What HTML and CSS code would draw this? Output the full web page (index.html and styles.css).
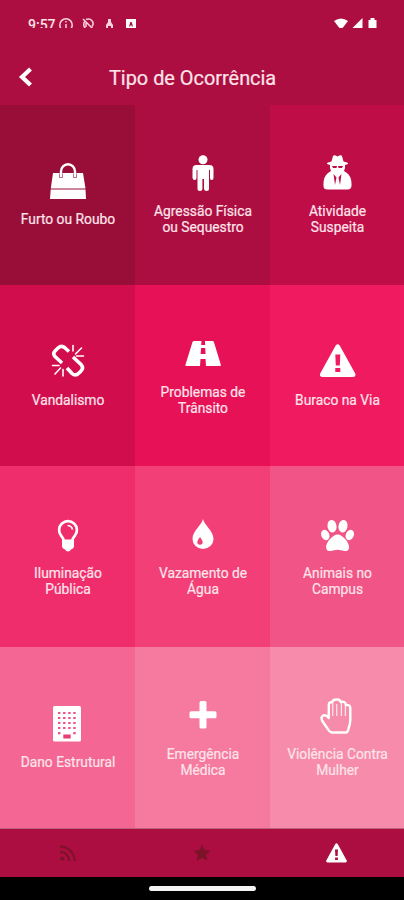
FILE: index.html
```
<!DOCTYPE html>
<html lang="pt-BR">
<head>
    <meta charset="UTF-8">
    <title>Tipo de Ocorrência</title>
    <link rel="stylesheet" href="styles.css">
</head>
<body>
    <div class="status">
        <span class="time">9:57</span>
        <svg class="notes" width="80" height="14" viewBox="0 0 80 14">
            <g fill="none" stroke="#f9d3dc" stroke-width="1.500">
                <circle cx="8" cy="7" r="6.200"/>
                <path d="M8 3v1.500M8 6v6"/>
                <path d="M25 1l11 11M27 3c-3 4 0 9 4 9M28 1.500c5-2 9 3 6 7M28 5v4"/>
            </g>
            <path fill="#f9d3dc" d="M50 1h3v3l2 3v4h-2V8h-3v3h-2V7l2-3z"/>
            <path fill="#fff" fill-rule="evenodd" d="M68 1h10v12H68zM71 8.500h1.200V7.500h1.600v1H75L73.700 4h-1.400z"/>
        </svg>
        <svg class="signal" width="44" height="11" viewBox="0 0 44 11" fill="#fff">
            <path d="M0 3Q7-2 14 3L9 9.500Q7 11 5 9.500z"/>
            <path d="M28.500 0v10H18.500z"/>
            <path d="M34.500 2h2V0h4v2h2v8h-8z"/>
        </svg>
    </div>

    <div class="header">
        <svg class="back" width="14" height="20" viewBox="0 0 14 20"><path d="M12.500 2L4 10l8.500 8" fill="none" stroke="#fff" stroke-width="4.200"/></svg>
        <h1>Tipo de Ocorrência</h1>
    </div>

    <div class="grid">
        <div class="tile furto">
            <svg class="icon" viewBox="0 0 36 36">
                <path fill="#fff" d="M3 10h30l2.500 15.500H.8zM.7 26.500h34.800L36 36H0z"/>
                <path fill="none" stroke="#fff" stroke-width="2.400" d="M11 14V8.500a7 7.300 0 0 1 14 0V14"/>
                <path fill="none" stroke="#990e39" stroke-width=".6" d="M9.500 10.500v4h3v-4M23.500 10.500v4h3v-4"/>
            </svg>
            <span>Furto ou Roubo</span>
        </div>
        <div class="tile agressao">
            <svg class="icon" viewBox="0 0 36 36" fill="#fff">
                <circle cx="18" cy="4.800" r="4.500"/>
                <path d="M11.500 10h13q4 0 4 4v9q0 2-1.800 2t-1.700-2v-8h-1v19q0 2-2.400 2T19 34V24h-1.600v10q0 2-2.500 2t-2.400-2V15h-1v8q0 2-1.800 2t-2.200-2v-9q0-4 4-4z"/>
            </svg>
            <span>Agressão Física<br>ou Sequestro</span>
        </div>
        <div class="tile suspeita">
            <svg class="icon" viewBox="0 0 36 36">
                <path fill="#fff" d="M8 7.500l3.500-1L13 1q1-1.500 4.500.5Q21 -.5 22 1l1.500 5.500 3.500 1q3 1.500-2 2.500v3l-1 3 3 2q5 4 4.500 13-.5 3.500-4 3.500H7.500q-4 0-4-3.500-.5-9 4.500-13l3-2-1-3v-3Q5 9 8 7.500z"/>
                <path fill="#bf0d48" d="M12 11h5l-.5 2H13zM18 11h5l-1 2h-3.500zM13.500 19l3 3.500L15 30zM21.500 19l-3 3.500L20 30z"/>
            </svg>
            <span>Atividade<br>Suspeita</span>
        </div>
        <div class="tile vandalismo">
            <svg class="icon" viewBox="0 0 36 36" fill="none" stroke="#fff">
                <path stroke-width="3.600" d="M12 19L5 12.500Q2.500 9.500 5 7L8 4Q11.500 1 14.500 3.500l4.500 4M17 24l5 5.500q3.500 3 7-.5l2-2q3-3 0-6.500L23 13"/>
                <path stroke-width="1.600" stroke-linecap="round" d="M23 1.500V7M31.500 4l-6 6M33.500 12h-7M2.500 21.500H9M5 30l5.500-6M13 32v-6.500"/>
            </svg>
            <span>Vandalismo</span>
        </div>
        <div class="tile transito">
            <svg class="icon" viewBox="0 0 36 36" fill="#fff">
                <path fill-rule="evenodd" d="M9 5h7.500l-.3 4h4l-.3-4h7.600q1 0 1.400 1l7 23q.2 1-1 1H21l-.5-7h-5l-.5 7H1.300q-1.200 0-.9-1L7.500 6Q8 5 9 5zM16.100 12l-.5 6h5l-.4-6z"/>
            </svg>
            <span>Problemas de<br>Trânsito</span>
        </div>
        <div class="tile buraco">
            <svg class="icon" viewBox="0 0 36 36">
                <path fill="#fff" d="M15.700 1.500q2-2.500 4 0l15.500 28q1.200 3-2.200 3.500H2q-3-.5-1.800-3.500z"/>
                <path fill="#ef1a5f" d="M15.300 10.500h5l-.5 11h-4zM15.300 24h5v4h-5z"/>
            </svg>
            <span>Buraco na Via</span>
        </div>
        <div class="tile iluminacao">
            <svg class="icon" viewBox="0 0 36 36">
                <path fill="none" stroke="#fff" stroke-width="2.700" d="M13.500 24q0-3-2.500-5.500a8.900 8.900 0 1 1 14 0q-2.500 2.500-2.500 5.500"/>
                <path fill="#fff" d="M12 22.500h12v7q0 2-3 3-1 2-3 2t-3-2q-3-1-3-3z"/>
                <path fill="none" stroke="#fff" stroke-width="1.600" d="M17.500 8.500q4 0 5 4"/>
            </svg>
            <span>Iluminação<br>Pública</span>
        </div>
        <div class="tile vazamento">
            <svg class="icon" viewBox="0 0 36 36">
                <path fill="#fff" d="M18 2c1.500 6.500 10.500 12 10.500 20a10.500 10 0 0 1-21 0C7.500 14 16.500 8.500 18 2z"/>
                <path fill="#f23f77" d="M15 20q2.700 3.500 2.700 5a2.700 2.700 0 0 1-5.400 0q0-1.500 2.700-5z"/>
            </svg>
            <span>Vazamento de<br>Água</span>
        </div>
        <div class="tile animais">
            <svg class="icon" viewBox="0 0 36 36" fill="#fff">
                <ellipse cx="12" cy="9.200" rx="4.500" ry="6.300" transform="rotate(-10 12 9.200)"/>
                <ellipse cx="23" cy="9.200" rx="4.500" ry="6.300" transform="rotate(10 23 9.200)"/>
                <ellipse cx="5.300" cy="18" rx="4" ry="5.400" transform="rotate(-22 5.300 18)"/>
                <ellipse cx="29.800" cy="18" rx="4" ry="5.400" transform="rotate(22 29.800 18)"/>
                <path d="M17.600 17.500c4.700 0 11.500 7.500 11.500 12.500 0 3.500-2.500 4.500-5 4-2.500-.4-4-1.200-6.500-1.200s-4 .8-6.500 1.200c-2.500.5-5-.5-5-4 0-5 6.800-12.500 11.500-12.500z"/>
            </svg>
            <span>Animais no<br>Campus</span>
        </div>
        <div class="tile dano">
            <svg class="icon" viewBox="0 0 36 36">
                <rect x="3" y="0" width="28" height="35.500" rx="1.500" fill="#fff"/>
                <path stroke="#f04f84" stroke-width="2.200" stroke-dasharray="2.400 2.700" d="M8 7h18M8 12h18M8 17h18M8 22h18"/>
                <path fill="#f04f84" d="M8 26h2.400v2.200H8zM23.300 26h2.400v2.200h-2.400z"/>
                <path fill="#e73f74" d="M13.300 28.500h7.400v4h-7.400z"/>
            </svg>
            <span>Dano Estrutural</span>
        </div>
        <div class="tile emergencia">
            <svg class="icon" viewBox="0 0 36 36">
                <path fill="#fff" d="M16 3h4q1.500 0 1.500 1.500v8.800h8.500q1.500 0 1.500 1.500v4q0 1.500-1.500 1.500h-8.500V29q0 1.500-1.500 1.500h-4q-1.500 0-1.500-1.500v-8.700H6q-1.500 0-1.500-1.500v-4q0-1.500 1.500-1.500h8.500V4.500Q14.500 3 16 3z"/>
            </svg>
            <span>Emergência<br>Médica</span>
        </div>
        <div class="tile violencia">
            <svg class="icon" viewBox="0 0 36 36" fill="none" stroke="#fff">
                <path stroke-width="2.400" stroke-linejoin="round" d="M8.800 20V7q0-3 3.500-3 .5-2.500 4.200-2.500Q19.800 1 20.800 4q5-1 5 3 4.500-.5 4.500 3v12q0 4-1.500 7.500-.8 5-3 5H11.800Q9.300 34 7.800 31L2.300 23q-2-4 1-5.500 3-1 5.500 2.500z"/>
                <path stroke-width="1" d="M12.800 5v13M16.800 6v12M21.300 5v13M25.300 8v10"/>
            </svg>
            <span>Violência Contra<br>Mulher</span>
        </div>
    </div>

    <div class="tabs">
        <a class="tab">
            <svg width="16" height="16" viewBox="0 0 16 16">
                <circle cx="2.200" cy="13.800" r="2" fill="#7d1329"/>
                <path fill="none" stroke="#7d1329" stroke-width="2.200" d="M0 6.800a9 9 0 0 1 9.200 9.200M0 1.500A14.500 14.500 0 0 1 14.700 16"/>
            </svg>
        </a>
        <a class="tab">
            <svg width="18" height="18" viewBox="0 0 18 18"><path fill="#7d1329" d="M9 .5l2.600 5.400 6 .8-4.400 4.100 1.100 5.900L9 13.900l-5.300 2.800 1.100-5.900L.4 6.700l6-.8z"/></svg>
        </a>
        <a class="tab current">
            <svg width="21" height="20" viewBox="0 0 21 20">
                <path fill="#fff" d="M9.300 1q1.200-1.500 2.400 0l9 16.500q.6 1.800-1.200 2h-18q-1.800-.2-1.200-2z"/>
                <path fill="#ad0e41" d="M9 6.500h3l-.4 6.500H9.400zM9.100 14.500h2.800V17H9.100z"/>
            </svg>
        </a>
    </div>
    <div class="gesture"><i></i></div>
</body>
</html>
```
FILE: styles.css
```
body,
h1 {
    margin: 0;
    padding: 0;
}
body {
    width: 404px;
    height: 900px;
    overflow: hidden;
    background: #ad0e41;
    color: #fde4ea;
    font: 13.8px/16px Roboto, sans-serif;
}
.status {
    display: flex;
    align-items: flex-start;
    box-sizing: border-box;
    height: 28px;
    padding: 18px 26px 0 28px;
    overflow: hidden;
}
.time {
    width: 30px;
    font-size: 14px;
    line-height: 14px;
    font-weight: 500;
}
.signal {
    margin: 0 0 0 auto;
}
.header {
    display: flex;
    align-items: center;
    height: 77px;
    box-sizing: border-box;
    padding: 24px 0 0 18px;
}
.back {
    margin-right: 77px;
    margin-top: -4px;
}
.header h1 {
    font-size: 19.9px;
    line-height: 24px;
    font-weight: 400;
    -webkit-text-stroke: 0.2px #fde4ea;
}
.grid {
    display: grid;
    grid-template-columns: 135px 135px 134px;
    grid-template-rows: 180px 181px 181px 181px;
}
.tile {
    display: flex;
    flex-direction: column;
    align-items: center;
    justify-content: center;
    padding-left: 1px;
    text-align: center;
    -webkit-text-stroke: 0.2px #fde4ea;
}
.icon {
    width: 36px;
    height: 36px;
    margin-bottom: 12px;
}
.furto { background: #990e39; }
.agressao { background: #ad0e41; }
.suspeita { background: #bf0d48; }
.vandalismo { background: #d20d4e; }
.transito { background: #e71157; }
.buraco { background: #ef1a5f; }
.iluminacao { background: #f02d6c; }
.vazamento { background: #f23f77; }
.animais { background: #f15486; }
.dano { background: #f46693; }
.emergencia { background: #f6799f; }
.violencia { background: #f68bab; }
.tabs {
    display: flex;
    height: 49px;
    box-sizing: border-box;
    padding-left: 1px;
    border-top: 1px solid #bd607c;
}
.tab {
    flex: 1;
    display: flex;
    align-items: center;
    justify-content: center;
}
.gesture {
    display: flex;
    justify-content: center;
    height: 23px;
    background: #000;
}
.gesture i {
    width: 107px;
    height: 5px;
    margin-top: 9px;
    border-radius: 3px;
    background: #f4f4f4;
}
```
